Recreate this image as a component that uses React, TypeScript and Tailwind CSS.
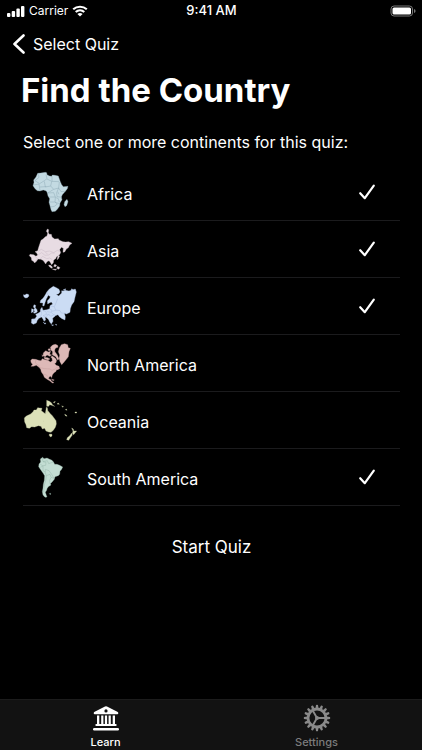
import { useState } from "react";

type Shape = {
  name: string;
  fill: string;
  stroke: string;
  viewBox: string;
  land: string;
  borders: string;
  checked: boolean;
};

const continents: Shape[] = [
  {
    name: "Africa",
    fill: "#c3dae2",
    stroke: "#8eabb6",
    viewBox: "24 12 162 171",
    land: "M68 40L77 39L91 37L95 38L96 44L104 48L110 49L112 45L120 46L130 48L132 54L136 65L140 74L145 80L159 79L157 86L150 95L142 104L139 111L141 119L135 129L134 138L127 148L121 154L111 155L108 149L105 137L102 127L104 116L99 108L97 99L94 93L85 90L75 93L67 92L60 86L54 77L57 67L56 60L63 51ZM156 118L159 125L155 137L150 140L147 134L149 125Z",
    borders: "M70 43L72 52L60 62L74 71L88 62L96 56L93 44M111 49V64L132 65M96 57L110 64L107 78L91 81L88 64M56 75L72 72L75 92M75 81L94 80M107 78L116 88L131 84L133 66M116 88L98 99L116 98L121 111L103 111M131 84L138 95L151 94M131 84L125 98L126 110L141 112M103 126H120L121 112L130 116L133 126M120 126L127 132L118 139L106 141M120 127L134 131M128 95L132 103",
    checked: true,
  },
  {
    name: "Asia",
    fill: "#e8dce3",
    stroke: "#cbbbc6",
    viewBox: "24 3 162 171",
    land: "M97 27L101 29L100 38L103 43L109 43L111 51L119 57L130 56L132 60L144 65L152 66L161 65L171 70L164 75L160 83L154 87L149 96L144 97L145 85L139 82L134 89L137 98L133 105L124 111L122 116L116 120L115 128L110 134L105 126L102 122L96 125L92 132L86 123L82 120L77 118L69 117L65 123L59 129L55 124L50 121L49 113L43 107L45 103L56 104L63 109L68 105L65 99L60 95L68 92L71 82L75 70L78 61L84 57L91 50L96 48L98 39L94 34ZM130 105L134 108L130 116L126 119L128 111ZM101 135L107 136L113 142L109 145L102 139ZM119 133L125 136L121 141L116 139ZM128 139L135 143L131 148L125 145ZM112 147L125 148L121 151Z",
    borders: "M69 94L79 88L91 95L104 93L116 98L127 91L136 95M70 104L80 98L90 106L101 105L110 99L119 99M76 117L83 109L95 116L104 114L112 119M91 96L98 103M60 109L68 116L62 125",
    checked: true,
  },
  {
    name: "Europe",
    fill: "#cbdcf4",
    stroke: "#aabcdf",
    viewBox: "24 0 162 171",
    land: "M25 50L30 51L34 48L40 49L42 54L37 59L32 60L27 57ZM57 80L62 82L61 89L66 95L67 102L60 106L55 105L59 100L56 96L59 91L55 87ZM50 92L55 94L55 101L49 104ZM75 74L77 67L84 61L90 52L96 41L103 33L115 25L124 29L132 34L135 42L130 48L124 49L131 54L140 45L140 38L145 39L151 37L162 39L173 35L181 33L184 42L180 58L177 71L170 81L166 92L165 103L155 108L148 106L151 116L150 126L141 122L133 116L129 110L121 113L118 117L113 120L114 130L109 138L104 132L101 125L95 119L90 117L92 126L87 130L85 125L80 117L72 121L67 127L64 135L55 139L49 135L50 123L60 122L65 115L62 109L69 106L76 101L77 93L81 88L84 97L95 95L104 92L105 83L113 78L109 72L103 75L98 78L97 69L104 61L106 56L100 52L94 63L90 74L87 84L83 83L84 75ZM144 36L152 32L151 37ZM168 37L170 32L174 35ZM84 132L88 135L93 135L90 139ZM109 140L116 141L112 143ZM121 139L126 140L123 142Z",
    borders: "M77 95L80 107L76 117M82 97L93 101L94 109L84 113L92 117L100 110L108 115L119 109M104 94L111 96L109 103L96 101M105 84L118 86L122 97L111 100M118 86L123 75L128 62M122 96L135 98L139 105L152 106M109 104L119 112M94 109L104 109M52 124L63 127M96 43L98 51",
    checked: true,
  },
  {
    name: "North America",
    fill: "#ddb9b7",
    stroke: "#c59c9b",
    viewBox: "24 0 162 171",
    land: "M47 77L51 72L61 73L71 76L78 77L82 71L92 75L99 76L106 81L112 77L111 70L107 66L112 63L121 70L125 76L123 83L119 86L124 91L132 94L134 101L125 104L122 110L117 113L112 120L110 128L107 124L102 126L101 132L106 133L110 139L117 143L112 144L105 138L95 132L88 127L85 119L79 111L77 103L72 97L64 91L55 94L48 94L53 88L49 84ZM133 39L139 29L149 26L158 29L160 38L166 40L162 50L160 65L154 73L145 84L140 89L135 80L132 70L134 60L130 50ZM106 37L113 30L121 28L128 31L129 37L122 39L119 45L120 53L113 50L108 45ZM85 54L92 47L100 51L107 49L104 58L110 60L104 64L96 60L91 65L84 63ZM113 49L121 52L127 60L132 72L128 75L122 65L112 59ZM87 67L98 68L105 72L99 75L89 72ZM81 59L84 62L82 65ZM99 42L105 41L107 46L101 47ZM109 132L118 135L114 137ZM124 97L132 98L129 104Z",
    borders: "M63 73L61 84L74 93M75 98L89 101L105 102L111 106L123 101M83 117L92 119L100 125",
    checked: false,
  },
  {
    name: "Oceania",
    fill: "#dce1b9",
    stroke: "#c2c8a1",
    viewBox: "24 0 162 171",
    land: "M28 78L34 72L47 66L54 59L57 54L64 54L68 47L74 48L81 49L79 56L87 62L91 65L96 56L100 58L106 65L112 71L117 78L123 86L124 96L121 106L115 115L108 121L101 120L93 117L89 109L82 111L78 103L70 101L59 105L50 104L43 109L35 107L33 98L29 90ZM91 65L94 46L97 47L99 60ZM103 126L111 127L111 132L107 135L103 131ZM95 25L103 28L109 32L113 39L119 43L110 40L104 38L101 43L95 43ZM115 31L121 28L118 33ZM126 36L130 33L133 37ZM140 42L145 43L144 46ZM151 53L154 51L156 55ZM149 67L154 69L156 73L151 71ZM170 108L175 111L176 117L185 117L180 123L176 128L172 124L174 117ZM170 123L172 129L167 136L161 145L155 143L157 137L164 131ZM180 60H185V63H180Z",
    borders: "M85 88H87",
    checked: false,
  },
  {
    name: "South America",
    fill: "#c3ddd3",
    stroke: "#98b8ac",
    viewBox: "24 0 162 171",
    land: "M76 30L83 25L87 29L96 27L104 31L111 34L116 40L119 46L126 46L134 49L143 54L140 61L135 67L134 76L130 80L120 83L118 91L112 98L106 104L108 108L100 113L96 119L95 124L91 130L94 139L96 144L90 145L84 138L82 128L84 117L85 106L88 94L89 80L84 72L77 62L71 53L72 45L77 39ZM103 134L107 133L106 137Z",
    borders: "M82 27L84 38L93 40L92 49L83 50L76 46M84 38L97 35L101 44L115 39M76 55L84 51L84 65L91 69L91 61L102 65L110 76L117 88L108 85L105 76L94 80L90 69M94 80L92 95L88 108L86 130M108 86L104 94L105 104",
    checked: true,
  },
];

function ContinentMap({ shape }: { shape: Shape }) {
  return (
    <svg viewBox={shape.viewBox} className="h-[57px] w-[54px] shrink-0" aria-hidden="true">
      <path d={shape.land} fill={shape.fill} stroke={shape.stroke} strokeWidth="1" strokeLinejoin="round" />
      <path d={shape.borders} fill="none" stroke={shape.stroke} strokeWidth="1.5" />
    </svg>
  );
}

function StatusBar() {
  return (
    <header className="grid h-[22px] grid-cols-3 items-center pl-[7px] pr-[6px] text-[12px]">
      <div className="flex items-center gap-1">
        <svg viewBox="0 0 18 12" className="h-3 w-[18px]" fill="white" aria-hidden="true">
          <rect x="0" y="8" width="3.4" height="4" rx="1" />
          <rect x="4.7" y="6" width="3.4" height="6" rx="1" />
          <rect x="9.4" y="3.5" width="3.4" height="8.5" rx="1" />
          <rect x="14" y="1" width="3.4" height="11" rx="1" />
        </svg>
        <span>Carrier</span>
        <svg viewBox="0 0 16 12" className="h-3 w-4" aria-hidden="true">
          <path d="M1.2 4.3C5 .8 11 .8 14.8 4.3M3.7 7C6.2 4.8 9.8 4.8 12.3 7" fill="none" stroke="white" strokeWidth="2.1" />
          <path d="M5.4 9C7 7.7 9 7.7 10.6 9L8 11.6Z" fill="white" />
        </svg>
      </div>
      <span className="text-center text-[13px] font-medium">9:41 AM</span>
      <svg viewBox="0 0 26 12" className="h-3 w-[26px] justify-self-end" aria-hidden="true">
        <rect x="1" y="1" width="21.5" height="10" rx="3" fill="none" stroke="#777" />
        <rect x="2.5" y="2.5" width="18.5" height="7" rx="1.5" fill="white" />
        <path d="M24 4Q25.6 4.6 25.6 6Q25.6 7.4 24 8Z" fill="#777" />
      </svg>
    </header>
  );
}

function BankIcon() {
  return (
    <svg viewBox="0 0 28 28" className="size-7" fill="white" aria-hidden="true">
      <path fillRule="evenodd" d="M14 2.3Q14.5 2.3 15 2.6L25.3 7.8Q26.3 8.3 26.3 9.2Q26.3 10.3 25.2 10.3H2.8Q1.7 10.3 1.7 9.2Q1.7 8.3 2.7 7.8L13 2.6Q13.5 2.3 14 2.3ZM14 5.3A1.6 1.6 0 1 0 14 8.5A1.6 1.6 0 1 0 14 5.3Z" />
      <path d="M5 11.5H7.3V20.5H5ZM9.2 11.5H11.4V20.5H9.2ZM12.9 11.5H15.1V20.5H12.9ZM16.6 11.5H18.8V20.5H16.6ZM20.7 11.5H23V20.5H20.7Z" />
      <rect x="3.3" y="20" width="21.4" height="2" rx="1" />
      <rect x="1" y="24" width="26" height="2.4" rx="1.2" />
    </svg>
  );
}

function GearIcon() {
  const teeth = Array.from({ length: 16 }, (_, i) => i * 22.5);
  return (
    <svg viewBox="0 0 28 28" className="size-7" aria-hidden="true">
      <g fill="#8a8a8a">
        {teeth.map((angle) => (
          <path key={angle} d="M12.5 4.4L13 1Q14 .5 15 1L15.5 4.4Z" transform={`rotate(${angle} 14 14)`} />
        ))}
      </g>
      <circle cx="14" cy="14" r="9" fill="none" stroke="#8a8a8a" strokeWidth="2.8" />
      <path d="M14 14H22M14 14L10 7.1M14 14L10 20.9" stroke="#8a8a8a" strokeWidth="1.9" />
      <circle cx="14" cy="14" r="2" fill="#8a8a8a" />
    </svg>
  );
}

function ContinentRow({ shape }: { shape: Shape }) {
  const [checked, setChecked] = useState(shape.checked);
  return (
    <li className="border-b border-[#1b1b1d]">
      <label className="flex h-14 cursor-pointer items-center gap-[10px] pr-6">
        <ContinentMap shape={shape} />
        <span className="flex-1 pt-[3px] text-[16px] leading-6">{shape.name}</span>
        <input
          type="checkbox"
          className="peer sr-only"
          checked={checked}
          onChange={(event) => setChecked(event.target.checked)}
        />
        <svg viewBox="0 0 18 18" className="invisible size-[18px] peer-checked:visible" aria-hidden="true">
          <path d="M2.2 10.2L6.8 15.2L15.8 2.6" fill="none" stroke="white" strokeWidth="2.2" strokeLinecap="round" strokeLinejoin="round" />
        </svg>
      </label>
    </li>
  );
}

export default function App() {
  return (
    <div className="flex min-h-screen flex-col bg-black font-[Inter,sans-serif] text-white">
      <StatusBar />
      <nav className="flex h-11 items-center px-3">
        <button type="button" className="flex items-center gap-2 text-[16px]">
          <svg viewBox="0 0 13 22" className="h-[22px] w-[13px]" aria-hidden="true">
            <path d="M11.5 2.5L2.5 11L11.5 19.5" fill="none" stroke="white" strokeWidth="2.6" strokeLinecap="round" strokeLinejoin="round" />
          </svg>
          Select Quiz
        </button>
      </nav>
      <main className="flex-1 pr-[22px] pl-[23px]">
        <h1 className="-ml-0.5 text-[33px] leading-[48px] font-bold">Find the Country</h1>
        <p className="pt-4 text-[16px] leading-6">Select one or more continents for this quiz:</p>
        <ul className="pt-2.5">
          {continents.map((shape) => (
            <ContinentRow key={shape.name} shape={shape} />
          ))}
        </ul>
        <div className="flex justify-center pt-[29px]">
          <button type="button" className="text-[17px] leading-6">Start Quiz</button>
        </div>
      </main>
      <footer className="grid h-[51px] grid-cols-2 border-t border-[#1c1c1c] bg-[#121212] text-[11px] leading-3 font-medium">
        <button type="button" className="flex flex-col items-center justify-start gap-1 pt-1">
          <BankIcon />
          Learn
        </button>
        <button type="button" className="flex flex-col items-center justify-start gap-1 pt-1 text-[#7c7c7c]">
          <GearIcon />
          Settings
        </button>
      </footer>
    </div>
  );
}
